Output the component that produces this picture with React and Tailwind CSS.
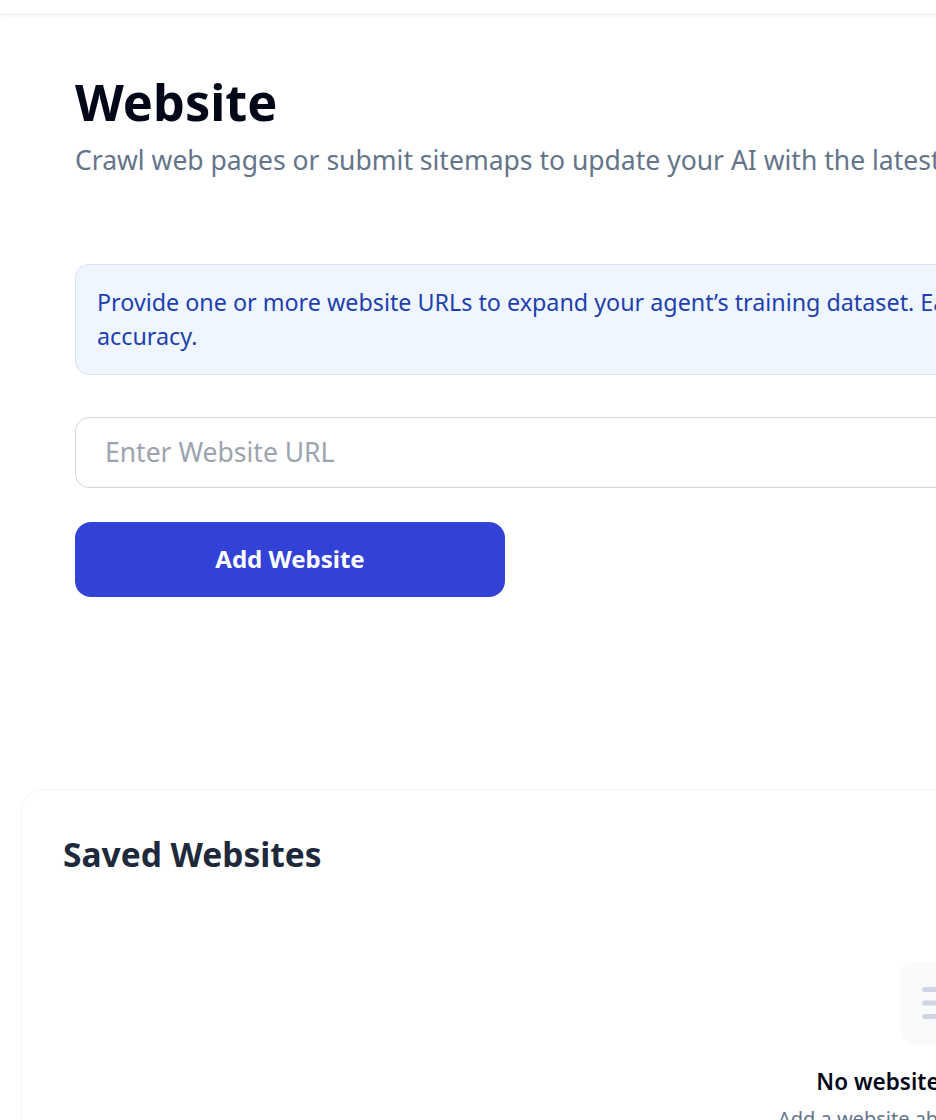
export default function App() {
  return (
    <div className="h-[1120px] w-[936px] overflow-hidden bg-white font-['Noto_Sans','Open_Sans',sans-serif]">
      <div className="w-[1882px]">
        <div className="h-[15px] border-b border-[#eceef0] bg-white shadow-[0_1px_4px_rgba(0,0,0,0.05)]" />
        <main className="flex flex-col px-[75px] pt-[59px]">
          <h1 className="text-[50.5px] leading-[56px] font-bold text-[#020817]">Website</h1>
          <p className="mt-[13px] text-[26.5px] leading-[34px] text-[#64748b]">
            Crawl web pages or submit sitemaps to update your AI with the latest information from your website content.
          </p>
          <div className="mt-[87px] rounded-[14px] border border-[#d3e3fd] bg-[#eff6ff] px-[21px] pt-[20px] pb-[21px] text-[23.3px] leading-[34px] text-[#1e40af]">
            Provide one or more website URLs to expand your agent’s training dataset. Each link gives the assistant more content to learn from and improves its
            <br />
            accuracy.
          </div>
          <input
            placeholder="Enter Website URL"
            className="mt-[42px] h-[71px] w-full rounded-[14px] border border-[#d1d5db] bg-white pr-[29px] pb-[2px] pl-[29px] text-[26.5px] placeholder:text-[#9ca3af]"
          />
          <button className="mt-[34px] h-[75px] w-[430px] rounded-[16px] bg-[#3342d6] pb-[2px] text-[24px] font-bold text-white">
            Add Website
          </button>
        </main>
        <section className="mx-[20px] mt-[192px] h-[600px] rounded-t-[24px] border border-[#f3f4f6] bg-white px-[42px] pt-[40px]">
          <h2 className="text-[33.5px] leading-[48px] font-bold text-[#1e293b]">Saved Websites</h2>
          <div className="mt-[84px] flex flex-col items-center">
            <div className="flex h-[82px] w-[82px] items-center justify-center rounded-[14px] bg-[#f9fafb]">
              <svg width="40" height="40" viewBox="0 0 40 40" fill="none" stroke="#d1d5e3" strokeWidth="5" strokeLinecap="round">
                <path d="M3.5 6.5h33M3.5 20h33M3.5 33.5h33" />
              </svg>
            </div>
            <h3 className="mt-[20px] text-[22.5px] leading-[36px] font-semibold text-[#020817]">No websites added yet</h3>
            <p className="mt-[4px] text-[20px] leading-[30px] text-[#64748b]">Add a website above to get started</p>
          </div>
        </section>
      </div>
    </div>
  );
}
